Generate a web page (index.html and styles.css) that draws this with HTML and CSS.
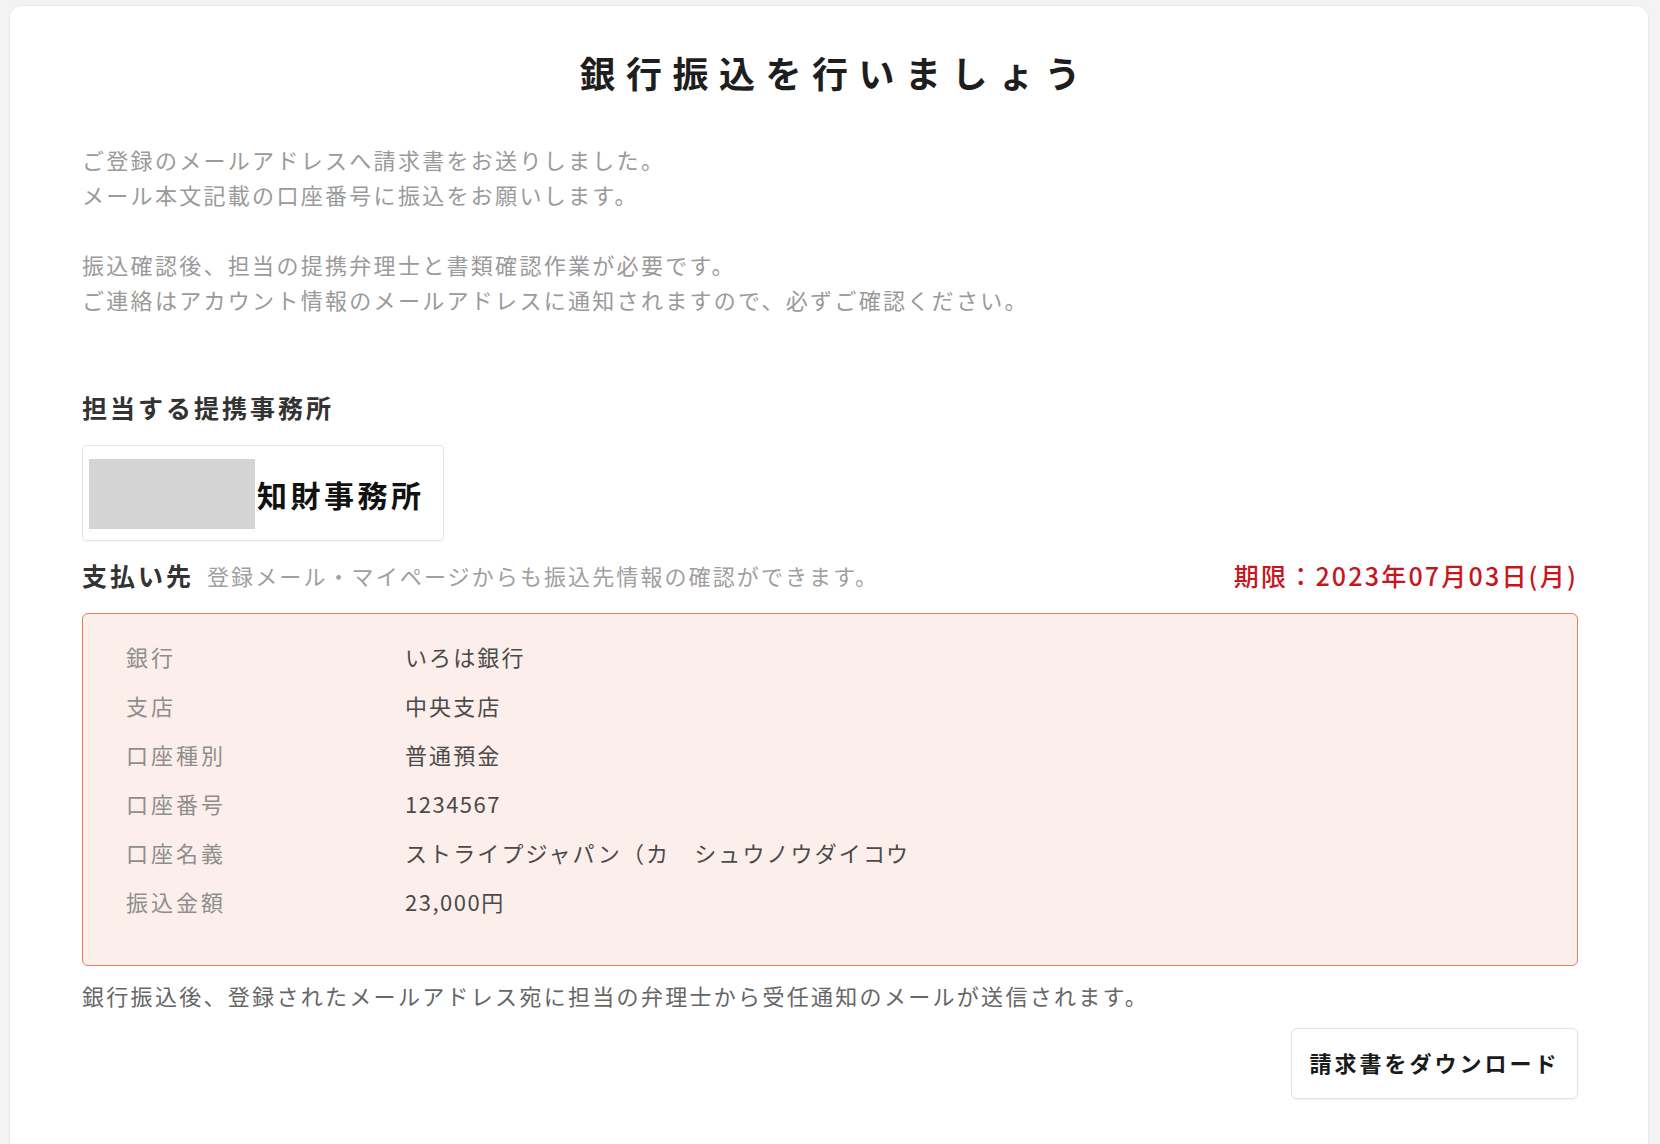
FILE: index.html
```html
<!DOCTYPE html>
<html lang="ja">
<head>
<meta charset="utf-8">
<title>銀行振込を行いましょう</title>
<link rel="stylesheet" href="styles.css">
</head>
<body>
<main class="card">
  <h1 class="title">銀行振込を行いましょう</h1>
  <p class="intro">ご登録のメールアドレスへ請求書をお送りしました。<br>メール本文記載の口座番号に振込をお願いします。<br><br>振込確認後、担当の提携弁理士と書類確認作業が必要です。<br>ご連絡はアカウント情報のメールアドレスに通知されますので、必ずご確認ください。</p>

  <h2 class="section-title">担当する提携事務所</h2>
  <div class="office">
    <div class="office-logo"></div>
    <span class="office-name">知財事務所</span>
  </div>

  <div class="payee-head">
    <div class="payee-left">
      <span class="payee-title">支払い先</span>
      <span class="payee-note">登録メール・マイページからも振込先情報の確認ができます。</span>
    </div>
    <span class="deadline">期限：2023年07月03日(月)</span>
  </div>

  <dl class="bank">
    <dt>銀行</dt><dd>いろは銀行</dd>
    <dt>支店</dt><dd>中央支店</dd>
    <dt>口座種別</dt><dd>普通預金</dd>
    <dt>口座番号</dt><dd class="num">1234567</dd>
    <dt>口座名義</dt><dd>ストライプジャパン（カ　シュウノウダイコウ</dd>
    <dt>振込金額</dt><dd class="num">23,000円</dd>
  </dl>

  <p class="after-note">銀行振込後、登録されたメールアドレス宛に担当の弁理士から受任通知のメールが送信されます。</p>

  <div class="actions">
    <button class="download" type="button">請求書をダウンロード</button>
  </div>
</main>
</body>
</html>
```

FILE: styles.css
```css
* { box-sizing: border-box; }

html, body {
  margin: 0;
  padding: 0;
  background: #f3f3f3;
  font-family: "Noto Sans CJK JP", "Noto Sans", sans-serif;
  color: #333;
}

body {
  padding: 6px 12px 0 10px;
  height: 1144px;
  overflow: hidden;
}

.card {
  background: #fff;
  border-radius: 12px;
  box-shadow: 0 0 0 1px #e9e9e9, 0 1px 3px rgba(0,0,0,0.06);
  min-height: 1200px;
  padding: 42px 70px 0 72px;
}

.title {
  margin: 0;
  text-align: center;
  font-size: 36px;
  line-height: 48px;
  font-weight: 700;
  letter-spacing: 10.5px;
  text-indent: 10.5px;
  color: #1e1e1e;
}

.intro {
  margin: 46px 0 0;
  font-size: 22px;
  line-height: 35px;
  letter-spacing: 2.3px;
  color: #9a9a9a;
}

.section-title {
  margin: 73px 0 0;
  font-size: 25px;
  line-height: 34px;
  font-weight: 600;
  letter-spacing: 3px;
  color: #333;
}

.office {
  margin-top: 21px;
  display: inline-flex;
  align-items: center;
  border: 1px solid #e6e6e6;
  border-radius: 4px;
  box-shadow: 0 1px 2px rgba(0,0,0,0.04);
  padding: 13px 18px 11px 6px;
}

.office-logo {
  width: 166px;
  height: 70px;
  background: #d4d4d4;
}

.office-name {
  margin-left: 2px;
  font-size: 30px;
  line-height: 40px;
  font-weight: 700;
  letter-spacing: 3.5px;
  color: #111;
}

.payee-head {
  margin-top: 17px;
  display: flex;
  align-items: center;
  justify-content: space-between;
  height: 34px;
}

.payee-left {
  display: flex;
  align-items: center;
}

.payee-title {
  font-size: 25px;
  line-height: 34px;
  font-weight: 700;
  letter-spacing: 3px;
  color: #333;
}

.payee-note {
  margin-left: 13px;
  font-size: 22px;
  letter-spacing: 2.1px;
  color: #a0a0a0;
}

.deadline {
  font-size: 25px;
  font-weight: 500;
  letter-spacing: 2.2px;
  color: #c8161e;
}

.bank {
  margin: 21px 0 0;
  display: grid;
  grid-template-columns: 279px 1fr;
  grid-auto-rows: 49px;
  align-items: center;
  padding: 17px 42px 40px 43px;
  background: #fcefeb;
  border: 1.5px solid #ee7a52;
  border-radius: 6px;
}

.bank dt, .bank dd {
  margin: 0;
  font-size: 22px;
  letter-spacing: 2.1px;
}

.bank dt { color: #8e8e8e; letter-spacing: 3px; }
.bank dd { color: #4a4a4a; }
.bank dd.num { letter-spacing: 1.5px; }

.after-note {
  margin: 12px 0 0;
  font-size: 22px;
  line-height: 34px;
  letter-spacing: 2.3px;
  color: #666;
}

.actions {
  margin-top: 16px;
  display: flex;
  justify-content: flex-end;
}

.download {
  width: 287px;
  height: 71px;
  background: #fff;
  border: 1px solid #e2e2e2;
  border-radius: 6px;
  box-shadow: 0 1px 2px rgba(0,0,0,0.05);
  font-family: inherit;
  font-size: 22px;
  font-weight: 700;
  letter-spacing: 3px;
  color: #1a1a1a;
  padding: 0 0 4px;
  cursor: pointer;
}
```
